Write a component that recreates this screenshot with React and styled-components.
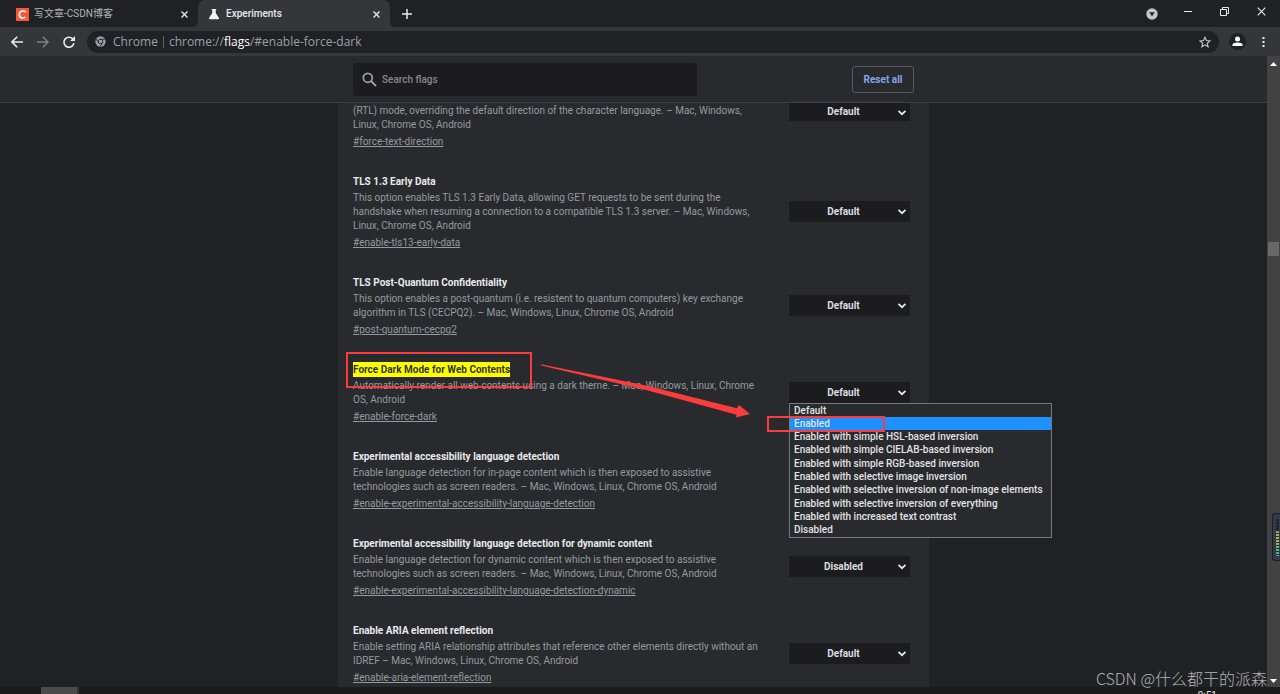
import React from "react";
import styled, { createGlobalStyle } from "styled-components";

const Global = createGlobalStyle`
  * { box-sizing: border-box; }
  body { margin: 0; background: #202124; font-family: Roboto, "Noto Sans CJK SC", sans-serif; }
  button, select, input { font-family: inherit; }
`;

const Window = styled.div`
  display: flex;
  flex-direction: column;
  height: 100vh;
  overflow: hidden;
  background: #202124;
  position: relative;
`;

const TabStrip = styled.div`
  display: flex;
  align-items: stretch;
  height: 27px;
  flex: none;
  background: #202124;
`;

const Tab = styled.div`
  position: relative;
  display: flex;
  align-items: center;
  gap: 5px;
  width: ${(p) => (p.$active ? 192 : 198)}px;
  padding: 1px 9px 0 ${(p) => (p.$active ? 10 : 16)}px;
  font-size: 10px;
  font-weight: ${(p) => (p.$active ? 500 : 400)};
  color: ${(p) => (p.$active ? "#e8eaed" : "#b0b3b8")};
  background: ${(p) => (p.$active ? "#35363a" : "transparent")};
  border-radius: 7px 7px 0 0;
`;

const Foot = styled.svg`
  position: absolute;
  bottom: 0;
  ${(p) => (p.$right ? "left: 100%;" : "right: 100%;")}
`;

const TabTitle = styled.span`
  flex: 1;
  line-height: 14px;
`;

const IconButton = styled.button`
  display: flex;
  align-items: center;
  justify-content: center;
  width: ${(p) => p.$w || 16}px;
  height: ${(p) => p.$h || 20}px;
  padding: 0;
  border: 0;
  background: none;
  color: ${(p) => p.$color || "#e8eaed"};
`;

const Spacer = styled.div`
  flex: 1;
`;

const WindowControls = styled.div`
  display: flex;
  align-items: flex-start;
`;

const Toolbar = styled.div`
  display: flex;
  align-items: center;
  flex: none;
  height: 29px;
  padding: 0 9px 0 7px;
  background: #35363a;
`;

const NavButtons = styled.div`
  display: flex;
  gap: 6px;
  margin-right: 8px;
`;

const AddressBar = styled.div`
  flex: 1;
  display: flex;
  align-items: center;
  height: 22px;
  padding: 0 5px 0 8px;
  border-radius: 11px;
  background: #202124;
  font-family: "Open Sans", "Noto Sans", sans-serif;
  font-size: 12px;
  line-height: 16px;
  color: #9aa0a6;
`;

const SiteName = styled.span`
  margin-left: 7px;
  padding-right: 5px;
  border-right: 1px solid #5f6368;
  line-height: 12px;
`;

const Url = styled.span`
  flex: 1;
  margin-left: 5px;
  b { font-weight: 400; color: #fff; }
`;

const Avatar = styled(IconButton)`
  margin: 0 9px 0 10px;
  width: 17px;
  height: 17px;
  border-radius: 50%;
  background: #202124;
`;

const Viewport = styled.div`
  flex: 1;
  min-height: 0;
  display: flex;
`;

const Page = styled.div`
  flex: 1;
  min-width: 0;
  display: flex;
  flex-direction: column;
`;

const Header = styled.header`
  flex: none;
  height: 47px;
  background: #292a2d;
  border-bottom: 1px solid #3d3e41;
`;

const HeaderInner = styled.div`
  display: flex;
  align-items: center;
  justify-content: space-between;
  max-width: 591px;
  height: 46px;
  margin: 0 auto;
  padding: 0 15px;
`;

const SearchBox = styled.label`
  display: flex;
  align-items: center;
  gap: 5px;
  width: 344px;
  height: 33px;
  padding: 0 9px;
  border-radius: 3px;
  background: #1c1c1e;
  color: #9aa0a6;
`;

const SearchInput = styled.input`
  flex: 1;
  min-width: 0;
  padding: 0;
  border: 0;
  outline: 0;
  background: none;
  font-size: 10px;
  font-weight: 500;
  color: #e8eaed;
  &::placeholder { color: #85888c; }
`;

const ResetButton = styled.button`
  width: 62px;
  height: 27px;
  padding: 0;
  border: 1px solid #56585c;
  border-radius: 3px;
  background: none;
  font-size: 10px;
  font-weight: 700;
  color: #80a6e8;
`;

const Scroller = styled.div`
  flex: 1;
  min-height: 0;
  overflow: hidden;
`;

const FlagList = styled.main`
  max-width: 591px;
  min-height: 100%;
  margin: 0 auto;
  padding: 0 19px 0 15px;
  background: #292a2d;
`;

const Item = styled.section`
  position: relative;
  display: grid;
  grid-template-columns: minmax(0, 1fr) 121px;
  column-gap: 27px;
  align-items: ${(p) => (p.$cut ? "start" : "center")};
  margin-bottom: 25px;
`;

const Details = styled.div`
  padding-top: ${(p) => (p.$cut ? 1 : 0)}px;
`;

const Title = styled.h2`
  margin: 0 0 2px;
  font-size: 10px;
  line-height: 15px;
  font-weight: 700;
  color: #e8eaed;
  mark { display: inline-block; background: #ff0; color: #33340f; }
`;

const Description = styled.p`
  margin: 0 0 3px;
  font-size: 10px;
  line-height: 14px;
  color: #949a9f;
`;

const Permalink = styled.a`
  display: block;
  font-size: 10px;
  line-height: 14px;
  color: #949a9f;
`;

const SelectWrap = styled.div`
  position: relative;
  height: ${(p) => (p.$cut ? 18 : 21)}px;
  margin-bottom: 2px;
  svg { position: absolute; right: 3px; top: 50%; margin-top: -4px; pointer-events: none; }
`;

const Select = styled.select`
  appearance: none;
  display: block;
  width: 100%;
  height: 100%;
  padding: 0 12px ${(p) => (p.$cut ? 2 : 0)}px 0;
  border: 0;
  border-radius: 0;
  background: #1c1c1e;
  font-size: 10px;
  font-weight: 700;
  color: #dcdee0;
  text-align: center;
  text-align-last: center;
`;

const Popup = styled.ul`
  position: absolute;
  z-index: 2;
  top: 100%;
  left: 0;
  display: flex;
  flex-direction: column;
  width: 263px;
  height: 135px;
  margin: 0;
  padding: 0;
  list-style: none;
  border: 1px solid #77797c;
  background: #292a2d;
`;

const Option = styled.li`
  flex: 1;
  padding-left: 4px;
  font-size: 10px;
  font-weight: 500;
  line-height: 13px;
  white-space: nowrap;
  color: #e2e3e5;
  background: ${(p) => (p.$active ? "#1e90ff" : "transparent")};
`;

const Annotation = styled.svg`
  position: absolute;
  z-index: 3;
  left: -7px;
  top: -11px;
  overflow: visible;
  pointer-events: none;
`;

const Scrollbar = styled.div`
  display: flex;
  flex-direction: column;
  align-items: center;
  justify-content: space-between;
  width: 13px;
  padding: 6px 0 4px;
  background: #424242;
`;

const Thumb = styled.div`
  width: 11px;
  height: 14px;
  background: #686868;
`;

const ThumbTrack = styled.div`
  flex: 1;
  padding-top: 176px;
`;

const Taskbar = styled.footer`
  display: flex;
  justify-content: space-between;
  flex: none;
  height: 7px;
  overflow: hidden;
  padding: 0 63px 0 41px;
  background: #1c1b1c;
  font-size: 10px;
  line-height: 12px;
  color: #e8e8e8;
`;

const TaskButton = styled.div`
  width: 38px;
  background: #4b4b4b;
  border-right: 2px solid #353535;
`;

const Clock = styled.time`
  padding-top: 3px;
`;

const Watermark = styled.div`
  position: absolute;
  z-index: 4;
  right: 13px;
  bottom: 4px;
  font-family: "Noto Sans CJK SC", sans-serif;
  font-weight: 300;
  font-size: 16px;
  line-height: 23px;
  color: #b4b5b6;
`;

const Meter = styled.div`
  position: absolute;
  z-index: 4;
  right: 0;
  top: 513px;
  width: 8px;
  height: 48px;
  padding: 5px 1px 4px 3px;
  border: 1px solid #1c1e26;
  border-right: 0;
  border-radius: 3px 0 0 3px;
  background: #353a4b;
`;

const MeterBars = styled.div`
  height: 100%;
  background:
    repeating-linear-gradient(transparent 0 2px, #2b3040 2px 3px),
    linear-gradient(#20232e 0 33%, #b5a850 34%, #a3b259 60%, #35b58e 95%);
`;

const flags = [
  {
    cut: true,
    text: "(RTL) mode, overriding the default direction of the character language. – Mac, Windows, Linux, Chrome OS, Android",
    id: "force-text-direction",
  },
  {
    title: "TLS 1.3 Early Data",
    text: "This option enables TLS 1.3 Early Data, allowing GET requests to be sent during the handshake when resuming a connection to a compatible TLS 1.3 server. – Mac, Windows, Linux, Chrome OS, Android",
    id: "enable-tls13-early-data",
  },
  {
    title: "TLS Post-Quantum Confidentiality",
    text: "This option enables a post-quantum (i.e. resistent to quantum computers) key exchange algorithm in TLS (CECPQ2). – Mac, Windows, Linux, Chrome OS, Android",
    id: "post-quantum-cecpq2",
  },
  {
    title: "Force Dark Mode for Web Contents",
    text: "Automatically render all web contents using a dark theme. – Mac, Windows, Linux, Chrome OS, Android",
    id: "enable-force-dark",
    open: true,
  },
  {
    title: "Experimental accessibility language detection",
    text: "Enable language detection for in-page content which is then exposed to assistive technologies such as screen readers. – Mac, Windows, Linux, Chrome OS, Android",
    id: "enable-experimental-accessibility-language-detection",
  },
  {
    title: "Experimental accessibility language detection for dynamic content",
    text: "Enable language detection for dynamic content which is then exposed to assistive technologies such as screen readers. – Mac, Windows, Linux, Chrome OS, Android",
    id: "enable-experimental-accessibility-language-detection-dynamic",
    value: "Disabled",
  },
  {
    title: "Enable ARIA element reflection",
    text: "Enable setting ARIA relationship attributes that reference other elements directly without an IDREF – Mac, Windows, Linux, Chrome OS, Android",
    id: "enable-aria-element-reflection",
  },
];

const darkOptions = [
  "Default",
  "Enabled",
  "Enabled with simple HSL-based inversion",
  "Enabled with simple CIELAB-based inversion",
  "Enabled with simple RGB-based inversion",
  "Enabled with selective image inversion",
  "Enabled with selective inversion of non-image elements",
  "Enabled with selective inversion of everything",
  "Enabled with increased text contrast",
  "Disabled",
];

const Cross = ({ size = 7, w = 1.5 }) => (
  <svg width={size} height={size} viewBox="0 0 8 8" stroke="currentColor" strokeWidth={w} aria-hidden="true">
    <path d="M0.6 0.6 7.4 7.4M7.4 0.6 0.6 7.4" />
  </svg>
);

function Flag({ flag }) {
  const { title, text, id, open, cut, value = "Default" } = flag;
  return (
    <Item $cut={cut}>
      <Details $cut={cut}>
        {title && <Title>{open ? <mark>{title}</mark> : title}</Title>}
        <Description>{text}</Description>
        <Permalink href={"#" + id}>#{id}</Permalink>
      </Details>
      <SelectWrap $cut={cut}>
        <Select $cut={cut} defaultValue={value} aria-label={title || id}>
          {(open ? darkOptions : ["Default", "Enabled", "Disabled"]).map((o) => (
            <option key={o}>{o}</option>
          ))}
        </Select>
        <svg width="10" height="9" viewBox="0 0 10 9" fill="none" stroke="#e8eaed" strokeWidth="1.7" aria-hidden="true">
          <path d="M1.5 2.8 5 6.2 8.5 2.8" />
        </svg>
        {open && (
          <Popup role="listbox" aria-label={title}>
            {darkOptions.map((o) => (
              <Option key={o} role="option" aria-selected={o === "Enabled"} $active={o === "Enabled"}>
                {o}
              </Option>
            ))}
          </Popup>
        )}
      </SelectWrap>
      {open && (
        <Annotation width="540" height="81" viewBox="0 0 540 81" fill="none" stroke="#fa3c3c" strokeWidth="2" aria-hidden="true">
          <rect x="1" y="2" width="184" height="34" />
          <rect x="422" y="66" width="116" height="14" />
          <path d="M195 13.2 300 34.5 391 57.2 393 54 404 63 390 66.5 390.5 63.8 300 39 195 14.6Z" fill="#fa3c3c" stroke="none" />
        </Annotation>
      )}
    </Item>
  );
}

export default function App() {
  return (
    <Window>
      <Global />
      <TabStrip>
        <Tab>
          <svg width="13" height="13" viewBox="0 0 13 13" aria-hidden="true">
            <rect width="13" height="13" fill="#fc5531" />
            <path d="M9.8 4.2C8.4 2.5 3.5 2.3 3.3 6.5 3.1 10.7 8 10.5 9.5 9" fill="none" stroke="#fff" strokeWidth="1.7" />
          </svg>
          <TabTitle>写文章-CSDN博客</TabTitle>
          <IconButton $w={10} aria-label="Close tab"><Cross /></IconButton>
        </Tab>
        <Tab $active>
          <Foot width="6" height="6" viewBox="0 0 6 6" aria-hidden="true"><path d="M6 0V6H0Q6 6 6 0Z" fill="#35363a" /></Foot>
          <svg width="13" height="12" viewBox="0 0 13 12" fill="#f1f3f4" aria-hidden="true">
            <path d="M3.8 1H8.2V2.2H7.7V5L11 10Q11.3 11.2 10.2 11.2H1.8Q.7 11.2 1 10L4.3 5V2.2H3.8Z" />
          </svg>
          <TabTitle>Experiments</TabTitle>
          <IconButton $w={10} aria-label="Close tab"><Cross /></IconButton>
          <Foot $right width="6" height="6" viewBox="0 0 6 6" aria-hidden="true"><path d="M0 0V6H6Q0 6 0 0Z" fill="#35363a" /></Foot>
        </Tab>
        <IconButton $w={34} $h={27} aria-label="New tab">
          <svg width="10" height="10" viewBox="0 0 10 10" stroke="currentColor" strokeWidth="1.5"><path d="M5 0V10M0 5H10" /></svg>
        </IconButton>
        <Spacer />
        <WindowControls>
          <IconButton $w={34} $h={27} aria-label="Tab search">
            <svg width="12" height="12" viewBox="0 0 12 12"><circle cx="6" cy="6" r="5.7" fill="#c3c6cb" /><path d="M3.2 4.2H8.8L6 8.2Z" fill="#202124" /></svg>
          </IconButton>
          <IconButton $w={37} $h={23} aria-label="Minimize">
            <svg width="8" height="8" viewBox="0 0 8 8" stroke="currentColor"><path d="M0 3.5H8" /></svg>
          </IconButton>
          <IconButton $w={37} $h={23} aria-label="Restore">
            <svg width="9" height="9" viewBox="0 0 9 9" fill="none" stroke="currentColor"><path d="M.5 2.5H6.5V8.5H.5ZM2.5 2.5V.5H8.5V6.5H6.5" /></svg>
          </IconButton>
          <IconButton $w={37} $h={23} aria-label="Close"><Cross size={9} w={1} /></IconButton>
        </WindowControls>
      </TabStrip>

      <Toolbar>
        <NavButtons>
          <IconButton $w={20} aria-label="Back">
            <svg width="12" height="12" viewBox="0 0 12 12" fill="none" stroke="currentColor" strokeWidth="1.6"><path d="M12 6H1.2M6.2 .8 1 6 6.2 11.2" /></svg>
          </IconButton>
          <IconButton $w={20} $color="#7d8084" aria-label="Forward">
            <svg width="12" height="12" viewBox="0 0 12 12" fill="none" stroke="currentColor" strokeWidth="1.5"><path d="M0 6H10.8M5.8 .8 11 6 5.8 11.2" /></svg>
          </IconButton>
          <IconButton $w={20} aria-label="Reload">
            <svg width="12" height="12" viewBox="0 0 12 12" fill="none" stroke="currentColor" strokeWidth="1.6"><path d="M10.2 3.5A5 5 0 1 0 10.9 7.2" /><path d="M12 0V5H7Z" fill="currentColor" stroke="none" /></svg>
          </IconButton>
        </NavButtons>
        <AddressBar>
          <svg width="11" height="11" viewBox="0 0 12 12" aria-hidden="true">
            <circle cx="6" cy="6" r="5.6" fill="#9aa0a6" />
            <circle cx="6" cy="6" r="2.5" fill="#9aa0a6" stroke="#202124" strokeWidth="1" />
            <path d="M6 3.5H11M3.8 7.2 1.2 3M8.2 7.2 5.7 11.5" stroke="#202124" strokeWidth=".9" />
          </svg>
          <SiteName>Chrome</SiteName>
          <Url>chrome://<b>flags</b>/#enable-force-dark</Url>
          <IconButton $w={18} $color="#c6c9cc" aria-label="Bookmark">
            <svg width="12" height="12" viewBox="0 0 24 24" fill="none" stroke="currentColor" strokeWidth="2.2"><path d="M12 2.5 14.9 9.1 22 9.8 16.6 14.5 18.2 21.5 12 17.8 5.8 21.5 7.4 14.5 2 9.8 9.1 9.1Z" /></svg>
          </IconButton>
        </AddressBar>
        <Avatar aria-label="Profile">
          <svg width="11" height="11" viewBox="0 0 11 11" fill="#fff"><circle cx="5.5" cy="3" r="2.5" /><path d="M.5 10V8.6Q1.2 6.5 5.5 6.5T10.5 8.6V10Z" /></svg>
        </Avatar>
        <IconButton $w={16} aria-label="Menu">
          <svg width="3" height="12" viewBox="0 0 3 12" fill="currentColor"><path d="M.5 1h2v2h-2zM.5 5h2v2h-2zM.5 9h2v2h-2z" /></svg>
        </IconButton>
      </Toolbar>

      <Viewport>
        <Page>
          <Header>
            <HeaderInner>
              <SearchBox>
                <svg width="15" height="15" viewBox="0 0 15 15" fill="none" stroke="currentColor" strokeWidth="1.8" aria-hidden="true"><circle cx="5.8" cy="5.8" r="4.5" /><path d="M9 9 14 14" /></svg>
                <SearchInput type="text" placeholder="Search flags" aria-label="Search flags" />
              </SearchBox>
              <ResetButton>Reset all</ResetButton>
            </HeaderInner>
          </Header>
          <Scroller>
            <FlagList>
              {flags.map((f) => <Flag key={f.id} flag={f} />)}
            </FlagList>
          </Scroller>
        </Page>
        <Scrollbar aria-hidden="true">
          <svg width="7" height="4" viewBox="0 0 7 4"><path d="M0 4 3.5 0 7 4Z" fill="#fff" /></svg>
          <ThumbTrack><Thumb /></ThumbTrack>
          <svg width="7" height="4" viewBox="0 0 7 4"><path d="M0 0 3.5 4 7 0Z" fill="#fff" /></svg>
        </Scrollbar>
      </Viewport>

      <Taskbar>
        <TaskButton />
        <Clock>9:51</Clock>
      </Taskbar>
      <Watermark>CSDN @什么都干的派森</Watermark>
      <Meter aria-hidden="true"><MeterBars /></Meter>
    </Window>
  );
}
